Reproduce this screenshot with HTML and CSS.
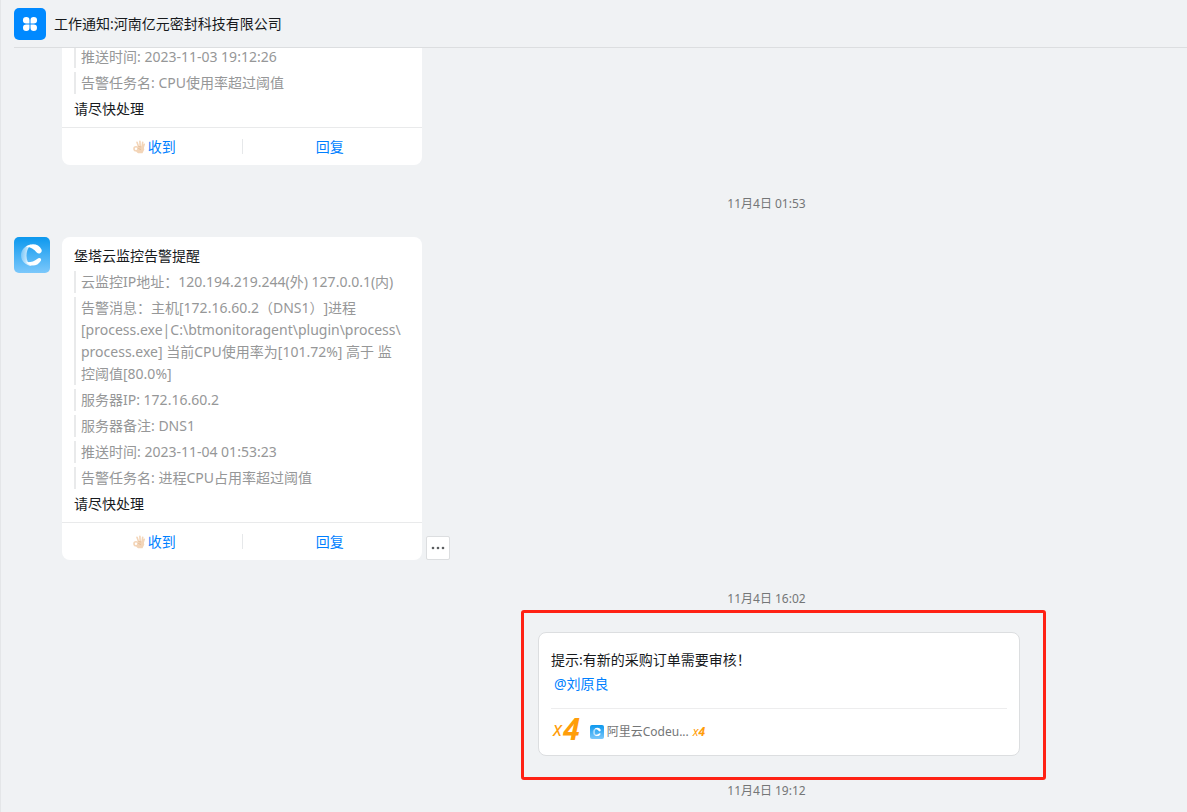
FILE: index.html
```html
<!DOCTYPE html>
<html lang="zh-CN">
<head>
<meta charset="utf-8">
<title>工作通知</title>
<link rel="stylesheet" href="styles.css">
</head>
<body>
<svg class="defs" aria-hidden="true">
  <defs>
    <linearGradient id="sky" x1="0" y1="0" x2="0" y2="1"><stop offset="0" stop-color="#0c98ee"/><stop offset="1" stop-color="#7cc8fb"/></linearGradient>
    <linearGradient id="fade" x1="0" y1="0" x2="1" y2="0"><stop offset="0" stop-color="#fff" stop-opacity=".3"/><stop offset=".5" stop-color="#fff" stop-opacity=".65"/><stop offset="1" stop-color="#fff"/></linearGradient>
  </defs>
  <symbol id="logo" viewBox="0 0 36 36">
    <rect width="36" height="36" rx="5" fill="url(#sky)"/>
    <path d="M17 7.500C11 8.500 7 13 7 18.200c0 6 5 10.300 11 10.800-3.500-2-5.500-5.500-5.500-10 0-4 1-8 4.500-11.500z" fill="url(#fade)"/>
    <path d="M12 10c4.500-4.500 13-3.500 15.500 2.500 1.200 3-2.500 5.500-4.800 3-2.500-3.500-6-5.500-10.700-5.500z" fill="#fff"/>
    <path d="M13.500 25.300c4 0 7-1.300 10-3.600 2-1.500 4.500 0 3.400 2-3.500 6-11.500 6.800-15 .6z" fill="#fff"/>
  </symbol>
  <symbol id="ok-hand" viewBox="0 0 12 14">
    <g fill="none" stroke="#f3d5b8" stroke-linecap="round">
      <path d="M5.500 6.500 4 2.300M7.200 6.500 6.900 1.300M9 7 9.700 2.200M10 8 11.200 4.200" stroke-width="1.600"/>
      <circle cx="3" cy="8.700" r="2" stroke-width="1.600"/>
    </g>
    <path d="M5 6.500 10.500 6 11.300 9.500 9.500 13.300H5L3 11.500 5.200 10z" fill="#f3d5b8"/>
    <path d="M5.200 8.500 8 9.500M5.500 6.500 8 7" stroke="#dcae88" stroke-width=".6"/>
  </symbol>
</svg>

<header class="topbar">
  <svg class="topbar-icon" viewBox="0 0 32 32" aria-hidden="true">
    <rect width="32" height="32" rx="5" fill="#0089ff"/>
    <g fill="#fff">
      <path d="M12.200 9h.1a3.200 3.200 0 0 1 3.200 3.200v3.300h-3.300a3.250 3.250 0 0 1 0-6.500z"/>
      <path d="M19.800 9a3.250 3.250 0 0 1 0 6.500h-3.300v-3.300A3.200 3.200 0 0 1 19.800 9z"/>
      <path d="M12.200 16.500h3.300v3.300a3.250 3.250 0 1 1-3.300-3.300z"/>
      <path d="M16.500 16.500h3.300a3.250 3.250 0 1 1-3.300 3.300z"/>
    </g>
  </svg>
  <h1 class="topbar-title">工作通知:河南亿元密封科技有限公司</h1>
</header>

<main class="chat">
  <article class="message">
    <div class="avatar-slot"></div>
    <div class="card">
      <div class="card-body">
        <p class="quote">推送时间: 2023-11-03 19:12:26</p>
        <p class="quote">告警任务名: CPU使用率超过阈值</p>
        <p>请尽快处理</p>
      </div>
      <div class="card-actions">
        <button type="button"><svg class="hand" aria-hidden="true"><use href="#ok-hand"/></svg>收到</button>
        <button type="button">回复</button>
      </div>
    </div>
  </article>

  <time class="stamp stamp-gap">11月4日 01:53</time>

  <article class="message">
    <div class="avatar-slot"><svg class="avatar" aria-hidden="true"><use href="#logo"/></svg></div>
    <div class="card">
      <div class="card-body">
        <p>堡塔云监控告警提醒</p>
        <p class="quote">云监控IP地址：120.194.219.244(外) 127.0.0.1(内)</p>
        <p class="quote">告警消息：主机[172.16.60.2（DNS1）]进程<br>[process.exe|C:\btmonitoragent\plugin\process\<br>process.exe] 当前CPU使用率为[101.72%] 高于 监<br>控阈值[80.0%]</p>
        <p class="quote">服务器IP: 172.16.60.2</p>
        <p class="quote">服务器备注: DNS1</p>
        <p class="quote">推送时间: 2023-11-04 01:53:23</p>
        <p class="quote">告警任务名: 进程CPU占用率超过阈值</p>
        <p>请尽快处理</p>
      </div>
      <div class="card-actions">
        <button type="button"><svg class="hand" aria-hidden="true"><use href="#ok-hand"/></svg>收到</button>
        <button type="button">回复</button>
      </div>
    </div>
    <button type="button" class="more" aria-label="更多"><svg viewBox="0 0 14 4" aria-hidden="true"><circle cx="2" cy="2" r="1.300"/><circle cx="7" cy="2" r="1.300"/><circle cx="12" cy="2" r="1.300"/></svg></button>
  </article>

  <time class="stamp stamp-tight">11月4日 16:02</time>

  <section class="highlight">
    <article class="notice">
      <div class="notice-body">
        <p>提示:有新的采购订单需要审核！</p>
        <p><a class="mention" href="#">@刘原良</a></p>
      </div>
      <div class="notice-foot">
        <span class="count">x<b>4</b></span>
        <svg class="mini" aria-hidden="true"><use href="#logo"/></svg>
        <span class="sender">阿里云Codeu...</span>
        <span class="count-small">x<b>4</b></span>
      </div>
    </article>
  </section>

  <time class="stamp">11月4日 19:12</time>
</main>
</body>
</html>
```
FILE: styles.css
```css
* { box-sizing: border-box; }

body {
  margin: 0;
  height: 100vh;
  display: flex;
  flex-direction: column;
  overflow: hidden;
  background: #f0f2f4;
  border-left: 1px solid #e4e6e8;
  color: #171a1d;
  font: 14px/22px "Noto Sans", "Noto Sans CJK SC", sans-serif;
  text-spacing-trim: space-all;
}

p, h1 { margin: 0; }
button { font: inherit; padding: 0; cursor: pointer; }
.defs { position: absolute; width: 0; height: 0; }

.topbar {
  flex: none;
  display: flex;
  align-items: center;
  gap: 8px;
  height: 48px;
  margin-left: 13px;
  border-bottom: 1px solid #dcdee0;
}
.topbar-icon { width: 32px; height: 32px; }
.topbar-title { font-size: 14px; font-weight: 400; }

.chat {
  flex: 1;
  min-height: 0;
  display: flex;
  flex-direction: column;
  justify-content: flex-end;
  overflow: hidden;
  padding: 0 0 12px 13px;
}
.chat > * { flex: none; }

.message { display: flex; align-items: flex-start; }
.avatar-slot { width: 48px; }
.avatar { display: block; width: 36px; height: 36px; }

.card { width: 360px; background: #fff; border-radius: 8px; }
.card-body { display: grid; gap: 4px; padding: 8px 12px 7px; }
.quote { padding-left: 5px; border-left: 2px solid #e9eaeb; color: #969798; white-space: nowrap; }

.card-actions {
  display: flex;
  align-items: center;
  height: 38px;
  border-top: 1px solid #e9eaeb;
}
.card-actions button {
  flex: 1;
  display: flex;
  align-items: center;
  justify-content: center;
  gap: 3px;
  height: 15px;
  border: 0;
  padding-left: 5px;
  background: none;
  color: #007fff;
}
.card-actions button + button {
  padding: 0 5px 0 0;
  border-left: 1px solid #e6e8ea;
}
.hand { width: 12px; height: 14px; }

.more {
  align-self: flex-end;
  display: grid;
  place-items: center;
  width: 24px;
  height: 24px;
  margin-left: 4px;
  background: #fff;
  border: 1px solid #dcdee0;
  border-radius: 2px;
}
.more svg { width: 14px; height: 4px; fill: #5c5e60; }

.stamp {
  padding-left: 332px;
  margin-top: 2px;
  text-align: center;
  color: #747677;
  font-size: 12px;
  line-height: 18px;
}
.stamp-gap { margin: 30px 0 24px; }
.stamp-tight { margin: 30px 0 2px; }

.highlight {
  align-self: flex-end;
  margin-right: 141px;
  padding: 19px 23px 21px 14px;
  border: 3px solid #ff2114;
  border-radius: 3px;
}
.notice {
  width: 482px;
  padding: 15px 12px 0;
  background: #fff;
  border: 1px solid #dcdee0;
  border-radius: 8px;
}
.notice-body { padding-bottom: 12px; border-bottom: 1px solid #ededee; line-height: 24px; }
.mention { margin-left: 3px; color: #007fff; text-decoration: none; }

.notice-foot { display: flex; align-items: center; height: 46px; color: #747677; font-size: 12px; }
.count, .count-small { color: #ff9d0a; font-style: italic; }
.count {
  display: flex;
  align-items: center;
  gap: 1px;
  margin-left: 2px;
  padding-bottom: 6px;
  font-size: 19px;
  line-height: 40px;
}
.count b { font-size: 30px; }
.mini { width: 14px; height: 14px; margin: 0 3px 0 10px; }
.sender { font-size: 12px; }
.count-small { margin-left: 4px; }
```
